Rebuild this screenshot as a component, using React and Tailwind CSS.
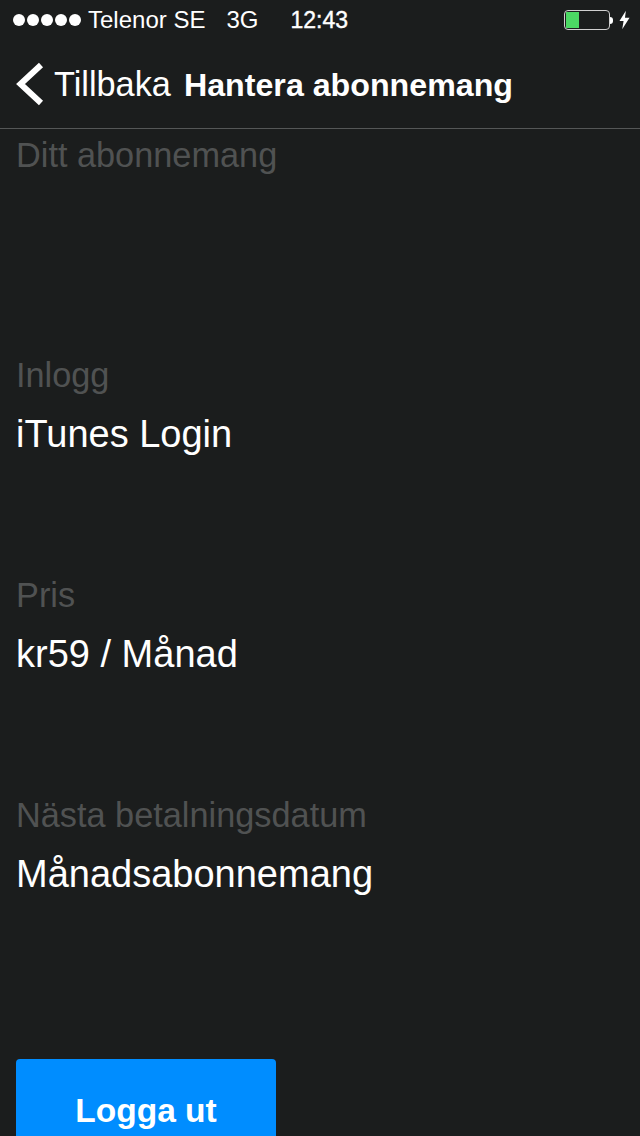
const Section = ({ label, value }) => (
  <div className="h-[220px] shrink-0 px-4">
    <div className="text-[34.3px] leading-[52px] text-[#505252]">{label}</div>
    {value && <div className="mt-[7px] text-[38px] leading-[52px] text-white">{value}</div>}
  </div>
);

const Battery = () => (
  <div className="flex items-center">
    <div className="flex h-[20px] w-[46px] rounded-[4px] border border-[#d0d0d0] p-[1px]">
      <div className="w-[13px] bg-[#4cd964]" />
    </div>
    <div className="h-[7px] w-[3px] rounded-r-full bg-white" />
    <svg className="ml-[6px]" width="11" height="20" viewBox="0 0 12 20">
      <path d="M7.5 0 L0.5 11 L5 11 L3.5 20 L11.5 7.5 L6.5 7.5 Z" fill="#fff" />
    </svg>
  </div>
);

export default function App() {
  return (
    <div className="flex h-[1136px] w-[640px] flex-col overflow-hidden bg-[#1b1d1d] font-['Liberation_Sans',Arial,sans-serif] text-white">
      {/* status bar */}
      <div className="flex h-10 shrink-0 items-center justify-between pl-[13px] pr-[10px] text-[24px]">
        <div className="flex items-center">
          <div className="flex gap-[2px]">
            {[0, 1, 2, 3, 4].map((i) => (
              <div key={i} className="h-[12px] w-[12px] rounded-full bg-white" />
            ))}
          </div>
          <span className="ml-[7px]">Telenor SE</span>
          <span className="ml-[21px]">3G</span>
          <span className="ml-[32px] text-[23px] [-webkit-text-stroke:0.4px_white]">12:43</span>
        </div>
        <Battery />
      </div>

      {/* nav bar */}
      <div className="flex h-[89px] shrink-0 items-center border-b border-[#555757] pl-[16px]">
        <svg width="28" height="44" viewBox="0 0 28 44">
          <path d="M25 3 L4.5 22 L25 41" fill="none" stroke="#fff" strokeWidth="6" />
        </svg>
        <span className="ml-[10px] mt-[2px] text-[34.3px]">Tillbaka</span>
        <span className="ml-[13px] mt-[2px] text-[32.2px] font-bold">Hantera abonnemang</span>
      </div>

      <Section label="Ditt abonnemang" />
      <Section label="Inlogg" value="iTunes Login" />
      <Section label="Pris" value="kr59 / Månad" />
      <Section label="Nästa betalningsdatum" value="Månadsabonnemang" />

      <div className="shrink-0 px-4 pt-[50px]">
        <button className="h-[90px] w-[260px] rounded-t-[4px] bg-[#008dff] pt-[15px] text-[33.5px] font-bold text-white">
          Logga ut
        </button>
      </div>
    </div>
  );
}
